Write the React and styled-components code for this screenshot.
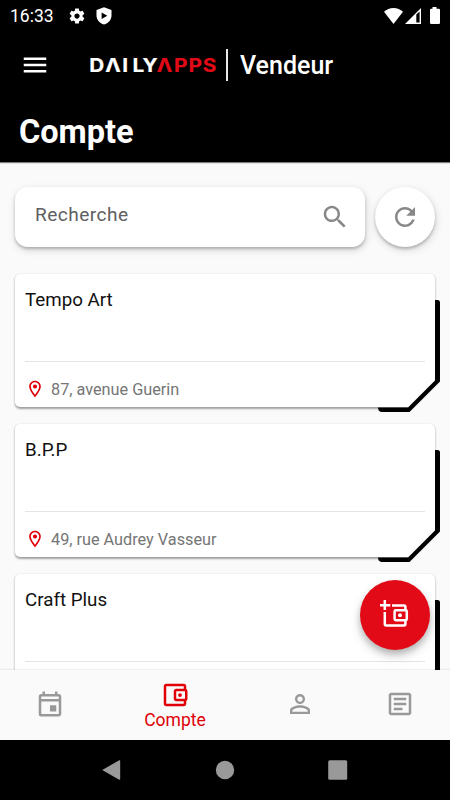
import React from "react";
import styled, { createGlobalStyle } from "styled-components";

const GlobalStyle = createGlobalStyle`
  * { box-sizing: border-box; }
  body { margin: 0; background: #fafafa; font-family: Roboto, sans-serif; }
`;

const Screen = styled.div`
  width: 450px;
  height: 800px;
  display: flex;
  flex-direction: column;
  background: #fafafa;
  overflow: hidden;
`;

const Header = styled.header`
  height: 162px;
  flex: none;
  background: #000;
  color: #fff;
  box-shadow: 0 1px 1px rgba(0, 0, 0, 0.5);
`;

const StatusBar = styled.div`
  height: 30px;
  display: flex;
  align-items: center;
  padding: 1px 9px 0 10px;
`;

const Clock = styled.span`
  font-size: 17.5px;
  line-height: 20px;
  width: 58px;
`;

const StatusIcons = styled.div`
  display: flex;
  align-items: center;
  gap: ${(p) => p.$gap}px;
  margin-left: ${(p) => (p.$end ? "auto" : 0)};
  svg { display: block; }
`;

const BrandBar = styled.div`
  height: 70px;
  display: flex;
  align-items: center;
  padding-left: 20px;
`;

const MenuButton = styled.button`
  border: 0;
  padding: 0;
  background: none;
  color: #fff;
  width: 30px;
  height: 30px;
  margin-right: 38px;
`;

const Logo = styled.svg`
  display: block;
  width: 130px;
  height: 30px;
  overflow: visible;
  font: 700 18.5px Inter, sans-serif;
`;

const BrandName = styled.span`
  display: flex;
  align-items: center;
  height: 32px;
  margin-left: 8px;
  padding: 2px 0 0 12px;
  border-left: 2px solid #e8e8e8;
  font-size: 25px;
  font-weight: 500;
  line-height: 30px;
`;

const Title = styled.h1`
  margin: 12px 0 0 19px;
  font-size: 32.5px;
  line-height: 40px;
  font-weight: 700;
`;

const Content = styled.main`
  height: 508px;
  flex: none;
  padding: 25.4px 15px 0;
  overflow: hidden;
`;

const SearchRow = styled.div`
  display: flex;
  gap: 10px;
  height: 60px;
  margin-bottom: 26.6px;
`;

const SearchField = styled.div`
  width: 350px;
  display: flex;
  align-items: center;
  justify-content: space-between;
  padding: 0 15px 0 20px;
  border-radius: 12.5px;
  background: #fff;
  box-shadow: 0 2px 3px rgba(0, 0, 0, 0.22), 1px 3px 9px rgba(0, 0, 0, 0.14);
  color: #888;
`;

const Placeholder = styled.span`
  margin-top: -4px;
  font-size: 19.1px;
  line-height: 24px;
  letter-spacing: 0.45px;
  color: #606060;
`;

const RoundButton = styled.button`
  display: grid;
  place-items: center;
  width: 60px;
  height: 60px;
  padding: 0;
  border: 0;
  border-radius: 50%;
  background: #fff;
  color: #888;
  box-shadow: 0 2px 3px rgba(0, 0, 0, 0.22), 1px 3px 9px rgba(0, 0, 0, 0.14);
`;

const CardList = styled.div`
  display: flex;
  flex-direction: column;
  gap: 17px;
`;

const Card = styled.article`
  position: relative;
  height: 133px;
  flex: none;
  padding: 0 10px;
  border-radius: 5px;
  background: #fff;
  box-shadow: 0 1.5px 2px rgba(0, 0, 0, 0.3), 0 1px 3px rgba(0, 0, 0, 0.12);
`;

const CardTitle = styled.h2`
  height: 88px;
  margin: 0;
  padding-top: 14px;
  border-bottom: 1px solid #e4e4e4;
  color: #111;
  font-size: 18.75px;
  line-height: 24px;
  font-weight: 400;
`;

const Address = styled.div`
  height: 45px;
  display: flex;
  align-items: center;
  padding-top: 11px;
  gap: 6px;
  color: #757575;
  font-size: 16.25px;
  line-height: 20px;
`;

const PinBox = styled.span`
  display: flex;
  margin-top: -2px;
  color: #e00008;
`;

const Accent = styled.svg`
  position: absolute;
  left: 362px;
  top: 25px;
  width: 66px;
  height: 116px;
`;

const BottomNav = styled.nav`
  position: relative;
  height: 70px;
  flex: none;
  display: flex;
  background: #fafafa;
  box-shadow: 0 -1px 1px rgba(0, 0, 0, 0.06);
`;

const NavItem = styled.button`
  width: ${(p) => (p.$active ? 150 : 100)}px;
  display: flex;
  flex-direction: column;
  align-items: center;
  padding: ${(p) => (p.$active ? 10 : 19)}px 0 0;
  border: 0;
  background: none;
  color: ${(p) => (p.$active ? "#e00008" : "#999")};
  font: 400 17.5px/20px Roboto, sans-serif;
`;

const Fab = styled.button`
  position: absolute;
  top: 20px;
  right: 20px;
  display: grid;
  place-items: center;
  width: 70px;
  height: 70px;
  padding: 0;
  border: 0;
  border-radius: 50%;
  background: #e30a17;
  box-shadow: 0 4px 6px rgba(0, 0, 0, 0.2), 0 6px 12px rgba(0, 0, 0, 0.14);
`;

const FabClip = styled.div`
  position: absolute;
  left: 0;
  right: 0;
  bottom: 100%;
  height: 110px;
  overflow: hidden;
  pointer-events: none;
`;

const SystemNav = styled.footer`
  height: 60px;
  flex: none;
  display: flex;
  justify-content: center;
  align-items: center;
  gap: 82.5px;
  background: #000;
`;

const paths = {
  menu: "M3 18h18v-2H3v2zm0-5h18v-2H3v2zm0-7v2h18V6H3z",
  search:
    "M15.5 14h-.79l-.28-.27C15.41 12.59 16 11.11 16 9.5 16 5.91 13.09 3 9.5 3S3 5.91 3 9.5 5.91 16 9.5 16c1.61 0 3.09-.59 4.23-1.57l.27.28v.79l5 4.99L20.49 19l-4.99-5zm-6 0C7.01 14 5 11.99 5 9.5S7.01 5 9.5 5 14 7.01 14 9.5 11.99 14 9.5 14z",
  refresh:
    "M17.65 6.35C16.2 4.9 14.21 4 12 4c-4.42 0-7.99 3.58-7.99 8s3.57 8 7.99 8c3.73 0 6.84-2.55 7.73-6h-2.08c-.82 2.33-3.04 4-5.65 4-3.31 0-6-2.69-6-6s2.69-6 6-6c1.66 0 3.14.69 4.22 1.78L13 11h7V4l-2.35 2.35z",
  place:
    "M12 2C8.13 2 5 5.13 5 9c0 5.25 7 13 7 13s7-7.75 7-13c0-3.87-3.13-7-7-7zM7 9c0-2.76 2.24-5 5-5s5 2.24 5 5c0 2.88-2.88 7.19-5 9.88C9.92 16.21 7 11.85 7 9zm5-2.5a2.5 2.5 0 1 0 0 5 2.5 2.5 0 0 0 0-5z",
  event:
    "M19 4h-1V2h-2v2H8V2H6v2H5c-1.11 0-1.99.9-1.99 2L3 20a2 2 0 0 0 2 2h14c1.1 0 2-.9 2-2V6c0-1.1-.9-2-2-2zm0 16H5V10h14v10zm0-12H5V6h14v2zm-7 5h5v5h-5z",
  wallet:
    "M21 7.28V5c0-1.1-.9-2-2-2H5a2 2 0 0 0-2 2v14c0 1.1.89 2 2 2h14c1.1 0 2-.9 2-2v-2.28A2 2 0 0 0 22 15V9a2 2 0 0 0-1-1.72zM20 9v6h-7V9h7zM5 19V5h14v2h-6c-1.1 0-2 .9-2 2v6c0 1.1.9 2 2 2h6v2H5zM16 10.5a1.5 1.5 0 1 0 0 3 1.5 1.5 0 0 0 0-3z",
  person:
    "M12 5.9a2.1 2.1 0 1 1 0 4.2 2.1 2.1 0 0 1 0-4.2m0 9c2.97 0 6.1 1.46 6.1 2.1v1.1H5.9V17c0-.64 3.13-2.1 6.1-2.1M12 4C9.79 4 8 5.79 8 8s1.79 4 4 4 4-1.79 4-4-1.79-4-4-4zm0 9c-2.67 0-8 1.34-8 4v3h16v-3c0-2.66-5.33-4-8-4z",
  article:
    "M19 5v14H5V5h14m0-2H5c-1.1 0-2 .9-2 2v14c0 1.1.9 2 2 2h14c1.1 0 2-.9 2-2V5c0-1.1-.9-2-2-2zM14 17H7v-2h7v2zm3-4H7v-2h10v2zm0-4H7V7h10v2z",
  settings:
    "M19.43 12.98c.04-.32.07-.64.07-.98s-.03-.66-.07-.98l2.11-1.65c.19-.15.24-.42.12-.64l-2-3.46c-.12-.22-.39-.3-.61-.22l-2.49 1c-.52-.4-1.08-.73-1.69-.98l-.38-2.65C14.46 2.18 14.25 2 14 2h-4c-.25 0-.46.18-.49.42l-.38 2.65c-.61.25-1.17.59-1.69.98l-2.49-1c-.23-.09-.49 0-.61.22l-2 3.46c-.13.22-.07.49.12.64l2.11 1.65c-.04.32-.07.65-.07.98s.03.66.07.98l-2.11 1.65c-.19.15-.24.42-.12.64l2 3.46c.12.22.39.3.61.22l2.49-1c.52.4 1.08.73 1.69.98l.38 2.65c.03.24.24.42.49.42h4c.25 0 .46-.18.49-.42l.38-2.65c.61-.25 1.17-.59 1.69-.98l2.49 1c.23.09.49 0 .61-.22l2-3.46c.12-.22.07-.49-.12-.64l-2.11-1.65zM12 15.5c-1.93 0-3.5-1.57-3.5-3.5s1.57-3.5 3.5-3.5 3.5 1.57 3.5 3.5-1.57 3.5-3.5 3.5z",
};

const Icon = ({ name, size = 30 }) => (
  <svg width={size} height={size} viewBox="0 0 24 24" fill="currentColor">
    <path d={paths[name]} />
  </svg>
);

const accounts = [
  { name: "Tempo Art", address: "87, avenue Guerin" },
  { name: "B.P.P", address: "49, rue Audrey Vasseur" },
  { name: "Craft Plus", address: "" },
];

const AccountCard = ({ name, address }) => (
  <Card>
    <CardTitle>{name}</CardTitle>
    {address && (
      <Address>
        <PinBox><Icon name="place" size={20} /></PinBox>
        {address}
      </Address>
    )}
    <Accent viewBox="0 0 66 116">
      <path d="M58 81.7L31 108.7V116H66V81.7z" fill="#fafafa" />
      <path
        d="M58 1h2.5q2.5 0 2.5 2.5V82.5L32.5 113H4Q1 112 1 108.5H31L58 81.5z"
        fill="#000"
      />
    </Accent>
  </Card>
);

export default function App() {
  return (
    <Screen>
      <GlobalStyle />
      <Header>
        <StatusBar>
          <Clock>16:33</Clock>
          <StatusIcons $gap={9}>
            <Icon name="settings" size={18} />
            <svg width="18" height="18" viewBox="0 0 18 18">
              <path d="M9 .3L16.5 3v5.5c0 4.4-3.2 7.6-7.5 9.1-4.3-1.5-7.5-4.7-7.5-9.1V3z" fill="#fff" />
              <path d="M6.6 5.5L12.3 8.8 6.6 12z" fill="#000" />
            </svg>
          </StatusIcons>
          <StatusIcons $gap={2} $end>
            <svg width="19" height="16" viewBox="0 0 19 16">
              <path d="M0 3.8Q4 0 9.5 0T19 3.8L9.5 16z" fill="#fff" />
            </svg>
            <svg width="16" height="16" viewBox="0 0 16 16">
              <path d="M0 16L16 0v16zM11.3 6.5V14.6H14.6V3.4z" fill="#fff" fillRule="evenodd" />
            </svg>
            <svg width="18" height="17" viewBox="0 0 18 17">
              <path d="M9.5 0h4v1.7h2.3q1.2 0 1.2 1.2V15.8q0 1.2-1.2 1.2H8.2Q7 17 7 15.8V2.9q0-1.2 1.2-1.2h1.3z" fill="#fff" />
            </svg>
          </StatusIcons>
        </StatusBar>
        <BrandBar>
          <MenuButton><Icon name="menu" /></MenuButton>
          <Logo viewBox="0 0 130 30" textAnchor="middle">
            <g transform="scale(1.12 1)" strokeWidth="0.2">
              <text y="22" x="7.9 22.4 33.2 44.9 55.5" fill="#fff" stroke="#fff">DΛILY</text>
              <text y="22" x="68.3 82.9 95.8 108.5" fill="#e30a17" stroke="#e30a17">ΛPPS</text>
            </g>
          </Logo>
          <BrandName>Vendeur</BrandName>
        </BrandBar>
        <Title>Compte</Title>
      </Header>
      <Content>
        <SearchRow>
          <SearchField>
            <Placeholder>Recherche</Placeholder>
            <Icon name="search" />
          </SearchField>
          <RoundButton><Icon name="refresh" /></RoundButton>
        </SearchRow>
        <CardList>
          {accounts.map((a) => <AccountCard key={a.name} {...a} />)}
        </CardList>
      </Content>
      <BottomNav>
        <FabClip>
          <Fab>
            <svg width="30" height="30" viewBox="0 0 30 30" fill="none" stroke="#fff" strokeWidth="2.5">
              <path d="M0 5.2H10.3M4.8 0V10M12 5.4H24Q25.4 5.4 25.4 6.8V10M4.8 12V24Q4.8 25.4 6.2 25.4H24Q25.4 25.4 25.4 24V20" />
              <rect x="14.6" y="10.2" width="12.2" height="10" rx="1.2" />
              <circle cx="20" cy="15.2" r="2" fill="#fff" stroke="none" />
            </svg>
          </Fab>
        </FabClip>
        <NavItem><Icon name="event" /></NavItem>
        <NavItem $active><Icon name="wallet" />Compte</NavItem>
        <NavItem><Icon name="person" /></NavItem>
        <NavItem><Icon name="article" /></NavItem>
      </BottomNav>
      <SystemNav>
        <svg width="30" height="20" viewBox="0 0 30 20">
          <path d="M4.2 10L21.2 .3q1 -.4 1 1V19q0 1-1 .7z" fill="#999" />
        </svg>
        <svg width="30" height="20" viewBox="0 0 30 20">
          <circle cx="15" cy="10" r="9.2" fill="#999" />
        </svg>
        <svg width="30" height="20" viewBox="0 0 30 20">
          <rect x="5.2" y=".3" width="19" height="19.4" rx="1.5" fill="#999" />
        </svg>
      </SystemNav>
    </Screen>
  );
}
